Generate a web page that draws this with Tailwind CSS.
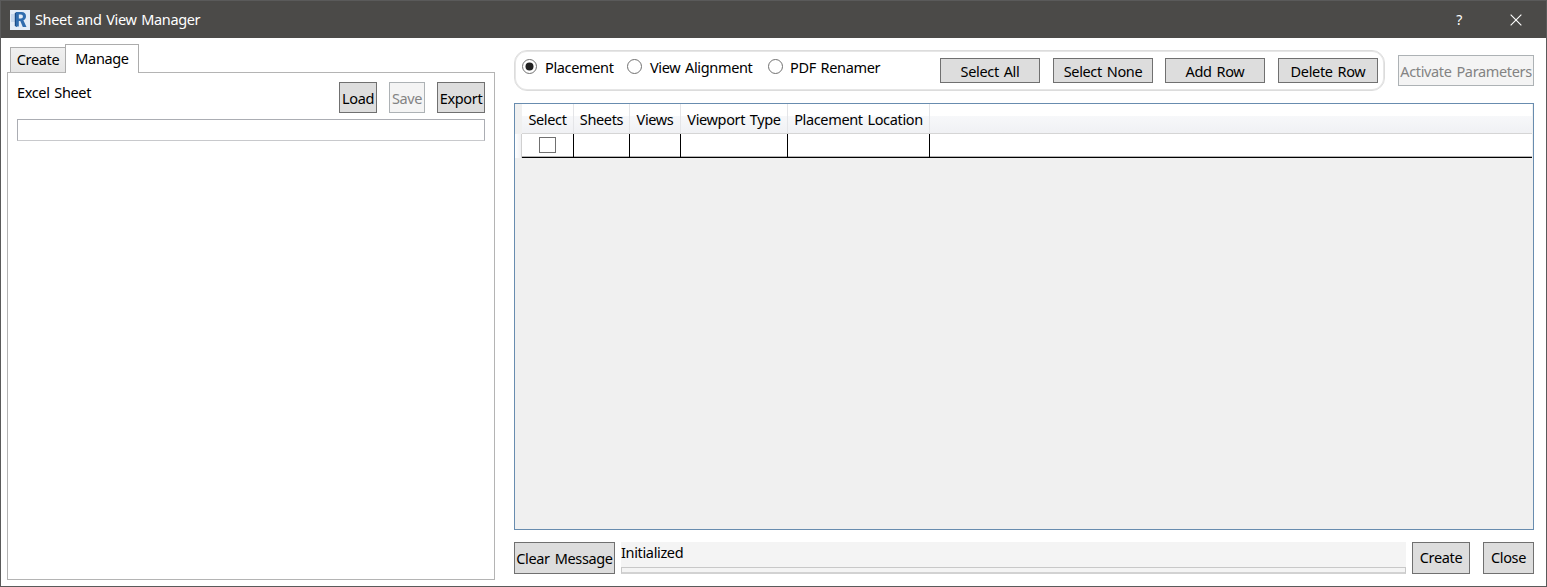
<!DOCTYPE html>
<html lang="en">
<head>
<meta charset="utf-8">
<title>Sheet and View Manager</title>
<script src="https://cdn.jsdelivr.net/npm/@tailwindcss/browser@4"></script>
</head>
<body class="h-[587px] w-[1547px] overflow-hidden font-['Noto_Sans','Open_Sans',sans-serif] text-[14.5px] leading-5 tracking-[-0.35px] [word-spacing:1.3px] text-black [&_button]:[word-spacing:1.5px]">
<div class="flex h-[587px] w-[1547px] flex-col border border-[#5a5a5a] bg-white whitespace-nowrap">
  <header class="flex h-[37px] shrink-0 items-center bg-[#4b4a48] pl-[9px] text-white">
    <svg class="h-5 w-5" viewBox="0 0 20 20">
      <rect width="20" height="20" fill="#e3ecf7"/>
      <path d="M1 4h8v8H1z" fill="#c6d7ec"/>
      <path d="M4.800 3 7 2v15l-2.200-.9z" fill="#1b4b86"/>
      <path fill-rule="evenodd" d="M6 2h5.500c3 0 4.500 1.700 4.500 4.300 0 2-1 3.400-2.600 4L16.500 17h-3.700L10.300 11H8.800v5.500H6zM8.800 4.500v4h2.100c1.300 0 2-.7 2-2s-.7-2-2-2z" fill="#2f6cae"/>
    </svg>
    <h1 class="ml-[5px] pb-0.5">Sheet and View Manager</h1>
    <span class="ml-auto w-[10px] text-center text-[14px]">?</span>
    <svg class="mr-[24px] ml-[46px] h-[12px] w-[12px]" viewBox="0 0 13 13" fill="none" stroke="#fff" stroke-width="1.2"><path d="M.7.7l11.600 11.600M12.300.7.7 12.300"/></svg>
  </header>
  <main class="flex min-h-0 grow">
    <section class="ml-[6px] flex w-[488px] flex-col pt-[6px]">
      <div class="z-10 -mb-px flex h-[29px] items-end pl-[3px]">
        <div class="mb-px flex h-[25px] w-[55px] items-center justify-center border border-r-0 border-b-0 border-[#acacac] bg-linear-to-b from-[#f0f0f0] to-[#e5e5e5] pb-0.5">Create</div>
        <div class="flex h-[29px] w-[74px] items-center justify-center border border-b-0 border-[#acacac] bg-white pb-0.5">Manage</div>
      </div>
      <div class="h-[508px] border border-[#b4b4b4] px-[9px] pt-[9px]">
        <div class="flex">
          <span>Excel Sheet</span>
          <button class="ml-auto h-[31px] w-[38px] border border-[#707070] bg-[#ddd]">Load</button>
          <button class="ml-3 h-[31px] w-9 border border-[#adb2b5] bg-[#f4f4f4] text-[#838383]">Save</button>
          <button class="ml-3 h-[31px] w-12 border border-[#707070] bg-[#ddd]">Export</button>
        </div>
        <input class="mt-[6px] block h-[22px] w-[468px] border border-[#abadb3] border-b-[#c8c9cc] bg-white" aria-label="Excel Sheet">
      </div>
    </section>
    <section class="ml-[19px] w-[1020px] pt-[12px]">
      <div class="flex h-[41px] items-start">
        <div class="flex h-[41px] w-[871px] items-start rounded-[13px] border border-[#dcdcdc] pt-[7px] pr-[6px] pl-[7px] shadow-[inset_0_0_0_1px_#e6e6e6]">
          <div class="flex w-[105px]">
            <svg class="mt-px h-[15px] w-[15px]" viewBox="0 0 15 15"><circle cx="7.500" cy="7.500" r="7" fill="#fff" stroke="#707070"/><circle cx="7.500" cy="7.500" r="4" fill="#212121"/></svg>
            <span class="-mt-px ml-2">Placement</span>
          </div>
          <div class="flex w-[141px]">
            <svg class="mt-px h-[15px] w-[15px]" viewBox="0 0 15 15"><circle cx="7.500" cy="7.500" r="7" fill="#fff" stroke="#707070"/></svg>
            <span class="-mt-px ml-2">View Alignment</span>
          </div>
          <div class="flex">
            <svg class="mt-px h-[15px] w-[15px]" viewBox="0 0 15 15"><circle cx="7.500" cy="7.500" r="7" fill="#fff" stroke="#707070"/></svg>
            <span class="-mt-px ml-[7px]">PDF Renamer</span>
          </div>
          <button class="ml-auto h-[25px] w-[100px] border border-[#707070] bg-[#ddd]">Select All</button>
          <button class="ml-[13px] h-[25px] w-[100px] border border-[#707070] bg-[#ddd]">Select None</button>
          <button class="ml-3 h-[25px] w-[100px] border border-[#707070] bg-[#ddd]">Add Row</button>
          <button class="ml-[13px] h-[25px] w-[100px] border border-[#707070] bg-[#ddd]">Delete Row</button>
        </div>
        <button class="mt-[5px] ml-[13px] h-[31px] w-[136px] border border-[#adb2b5] bg-[#f4f4f4] text-[#838383]">Activate Parameters</button>
      </div>
      <div class="mt-[12px] h-[427px] border border-[#688caf] bg-[#f0f0f0] pr-px">
        <div class="flex h-[30px]">
          <div class="w-[7px] bg-[#f0f0f0]"></div>
          <div class="flex grow border-b border-[#d5d5d5] bg-linear-to-b from-white from-40% via-[#f7f8fa] via-40% to-[#f0f1f4]">
            <div class="w-[52px] border-r border-[#e4e5e8] pt-[5px] text-center">Select</div>
            <div class="w-[56px] border-r border-[#e4e5e8] pt-[5px] text-center">Sheets</div>
            <div class="w-[51px] border-r border-[#e4e5e8] pt-[5px] text-center">Views</div>
            <div class="w-[107px] border-r border-[#e4e5e8] pt-[5px] text-center">Viewport Type</div>
            <div class="w-[142px] border-r border-[#e4e5e8] pt-[5px] text-center">Placement Location</div>
          </div>
        </div>
        <div class="flex h-6">
          <div class="w-[7px] border-r border-[#d0d0d0] bg-linear-to-r from-white to-[#f0f1f4]"></div>
          <div class="flex grow border-b border-black bg-white shadow-[inset_0_-1px_0_#b4b4b4]">
            <div class="flex w-[52px] justify-center border-r border-black pt-[3px]"><span class="h-4 w-[17px] border border-[#707070]"></span></div>
            <div class="w-[56px] border-r border-black"></div>
            <div class="w-[51px] border-r border-black"></div>
            <div class="w-[107px] border-r border-black"></div>
            <div class="w-[142px] border-r border-black"></div>
          </div>
        </div>
      </div>
      <footer class="mt-3 flex h-8">
        <button class="h-8 w-[101px] border border-[#707070] bg-[#ddd]">Clear Message</button>
        <div class="ml-[6px] flex h-8 w-[785px] flex-col bg-[#f4f4f4]">
          <span class="h-[25px]">Initialized</span>
          <div class="mt-auto h-[7px] border border-b-2 border-[#c8c8c8] border-b-[#d2d2d2] bg-[#f4f4f4]"></div>
        </div>
        <button class="ml-[6px] h-8 w-[58px] border border-[#707070] bg-[#ddd] pb-0.5">Create</button>
        <button class="ml-[13px] h-8 w-[51px] border border-[#707070] bg-[#ddd] pb-0.5">Close</button>
      </footer>
    </section>
  </main>
</div>
</body>
</html>
